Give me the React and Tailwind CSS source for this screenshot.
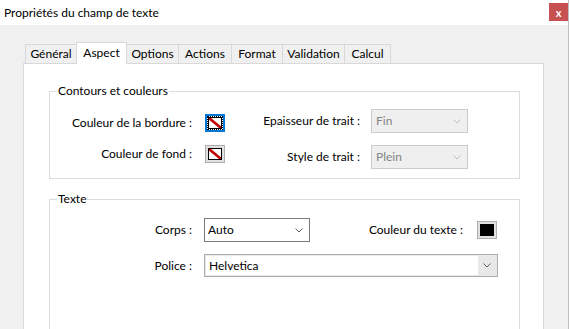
import React from "react";

const TABS = [
  { label: "Général",    w: "w-[52px]" },
  { label: "Aspect",     w: "w-[51px]", active: true },
  { label: "Options",    w: "w-[53px]" },
  { label: "Actions",    w: "w-[54px]" },
  { label: "Format",     w: "w-[52px]" },
  { label: "Validation", w: "w-[63px]" },
  { label: "Calcul",     w: "w-[47px]" },
];

function Chevron({ color = "#606060" }) {
  return (
    <svg width="8" height="5" viewBox="0 0 8 5" className="shrink-0">
      <path d="M0.5 0.5 L4 4 L7.5 0.5" fill="none" stroke={color} strokeWidth="1" />
    </svg>
  );
}

function NoColor() {
  return (
    <div className="w-full h-full border border-black bg-white overflow-hidden">
      <svg width="100%" height="100%" viewBox="0 0 12 10" preserveAspectRatio="none">
        <line x1="0" y1="0" x2="12" y2="10" stroke="#c00000" strokeWidth="2.6" />
      </svg>
    </div>
  );
}

function Swatch({ focused, black }) {
  if (focused) {
    return (
      <div className="w-[20px] h-[18px] border-2 border-[#0078d7] shrink-0">
        <div className="w-full h-full border border-dotted border-black">
          <NoColor />
        </div>
      </div>
    );
  }
  return (
    <div className="w-[20px] h-[18px] border border-[#adadad] bg-[#e1e1e1] p-[2px] shrink-0">
      {black ? <div className="w-full h-full bg-black" /> : <NoColor />}
    </div>
  );
}

function DisabledSelect({ value }) {
  return (
    <div className="w-[97px] h-[24px] border border-[#cccccc] bg-[#efefef] flex items-center justify-between pl-[4px] pr-[6px] text-[#838383]">
      <span>{value}</span>
      <Chevron color="#bfbfbf" />
    </div>
  );
}

export default function App() {
  return (
    <div className="w-[569px] h-[329px] overflow-hidden bg-[#f0f0f0] border-r border-[#bfbfbf] font-['Lato',sans-serif] text-[12px] text-black flex flex-col">
      {/* Title bar */}
      <div className="h-[25px] bg-white flex items-start justify-between shrink-0">
        <span className="pl-[4px] leading-[25px]">Propriétés du champ de texte</span>
        <div className="mt-[3px] w-[19px] h-[18px] bg-[#c75050] text-white flex items-center justify-center text-[11px] font-bold leading-none">x</div>
      </div>

      {/* Body */}
      <div className="pt-[17px] pl-[23px]">
        {/* Tabs */}
        <div className="flex items-end pl-[2px] relative z-10">
          {TABS.map((t, i) => (
            <div key={t.label}
              className={`${t.w} ${i > 0 ? "-ml-px" : ""} border border-b-0 border-[#d9d9d9] flex items-center justify-center leading-none
                ${t.active ? "h-[22px] bg-white pb-[2px] relative z-10" : "h-[19px] mb-px bg-[#f0f0f0]"}`}>
              {t.label}
            </div>
          ))}
        </div>

        {/* Panel */}
        <div className="-mt-px w-[521px] h-[300px] bg-white border border-[#d9d9d9] pl-[25px] pt-[19px]">
          {/* Contours et couleurs */}
          <fieldset className="w-[471px] border border-[#dcdcdc]">
            <legend className="ml-[7px] px-[1px] leading-[16px]">Contours et couleurs</legend>
            <div className="flex h-[79px]">
              <div className="flex flex-col pt-[15px] gap-[13px]">
                <div className="flex items-center h-[18px]">
                  <span className="w-[142px] text-right">Couleur de la bordure :</span>
                  <div className="ml-[13px]"><Swatch focused /></div>
                </div>
                <div className="flex items-center h-[18px]">
                  <span className="w-[142px] text-right">Couleur de fond :</span>
                  <div className="ml-[13px]"><Swatch /></div>
                </div>
              </div>
              <div className="flex flex-col pt-[10px] gap-[12px]">
                <div className="flex items-center">
                  <span className="w-[135px] text-right">Epaisseur de trait :</span>
                  <div className="ml-[11px]"><DisabledSelect value="Fin" /></div>
                </div>
                <div className="flex items-center">
                  <span className="w-[135px] text-right">Style de trait :</span>
                  <div className="ml-[11px]"><DisabledSelect value="Plein" /></div>
                </div>
              </div>
            </div>
          </fieldset>

          {/* Texte */}
          <fieldset className="mt-[12px] w-[471px] border border-[#dcdcdc]">
            <legend className="ml-[7px] px-[1px] leading-[16px]">Texte</legend>
            <div className="flex flex-col pt-[11px] gap-[12px] h-[160px]">
              <div className="flex items-center h-[24px]">
                <span className="w-[142px] text-right">Corps :</span>
                <div className="ml-[12px] w-[106px] h-[24px] border border-[#7a7a7a] bg-white flex items-center justify-between pl-[3px] pr-[6px]">
                  <span>Auto</span>
                  <Chevron />
                </div>
                <span className="ml-[47px] w-[106px] text-right">Couleur du texte :</span>
                <div className="ml-[14px]"><Swatch black /></div>
              </div>
              <div className="flex items-center h-[23px]">
                <span className="w-[142px] text-right">Police :</span>
                <div className="ml-[12px] w-[294px] h-[23px] border border-[#adadad] bg-[#e8e8e8] p-px flex">
                  <div className="flex-1 bg-white flex items-center pl-[3px]">Helvetica</div>
                  <div className="w-[18px] flex items-center justify-center">
                    <Chevron />
                  </div>
                </div>
              </div>
            </div>
          </fieldset>
        </div>
      </div>
    </div>
  );
}
